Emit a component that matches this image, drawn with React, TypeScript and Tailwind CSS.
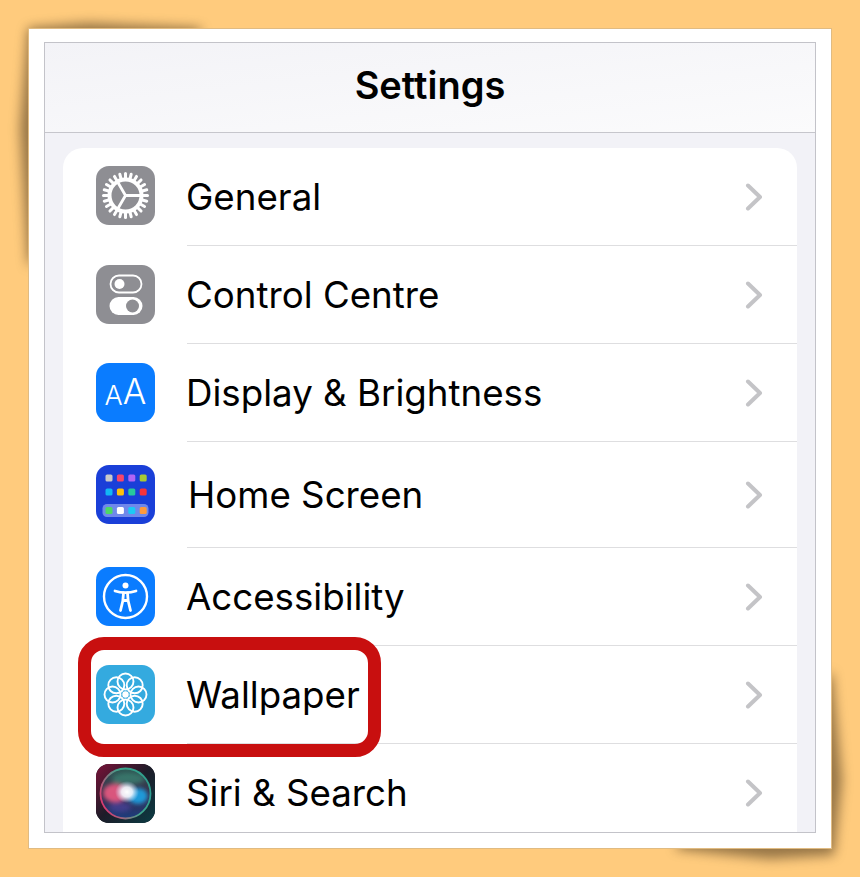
import React from "react";

function Chevron() {
  return (
    <svg width="18" height="28" viewBox="0 0 18 28" fill="none" className="shrink-0">
      <path d="M3 2.5 L15 14 L3 25.5" stroke="#c4c4c7" strokeWidth="4" strokeLinecap="round" strokeLinejoin="round" />
    </svg>
  );
}

function GearIcon() {
  const teeth = Array.from({ length: 24 }, (_, i) => i * 15);
  return (
    <div className="w-[59px] h-[59px] rounded-[13px] bg-[#8e8e93] shrink-0">
      <svg width="59" height="59" viewBox="0 0 59 59" fill="none">
        <g stroke="#fff">
          {teeth.map((a) => (
            <line key={a} x1="29.5" y1="7.5" x2="29.5" y2="13" strokeWidth="3" strokeLinecap="round" transform={`rotate(${a} 29.5 29.5)`} />
          ))}
          <circle cx="29.5" cy="29.5" r="16" strokeWidth="4" />
          <path d="M29.5 29.5 L46 29.5 M29.5 29.5 L21.2 15.2 M29.5 29.5 L21.2 43.8" strokeWidth="2.8" />
        </g>
      </svg>
    </div>
  );
}

function ControlIcon() {
  return (
    <div className="w-[59px] h-[59px] rounded-[13px] bg-[#8e8e93] shrink-0">
      <svg width="59" height="59" viewBox="0 0 59 59" fill="none">
        <rect x="14.5" y="10.5" width="31" height="17" rx="8.5" stroke="#fff" strokeWidth="1.8" />
        <circle cx="23.5" cy="19" r="5" fill="#fff" />
        <rect x="13.5" y="32" width="33" height="18" rx="9" fill="#fff" />
        <circle cx="36.5" cy="41" r="6.5" fill="#8e8e93" />
      </svg>
    </div>
  );
}

function TextSizeIcon() {
  return (
    <div className="w-[59px] h-[59px] rounded-[13px] bg-[#0a7cff] shrink-0 flex items-end justify-center pb-[13px] text-white font-['Inter',sans-serif] font-light leading-none">
      <span className="text-[27px]">A</span>
      <span className="text-[35px]">A</span>
    </div>
  );
}

function HomeIcon() {
  const top = ["#c9c9c9", "#f9456b", "#b065f5", "#a9c934", "#12b7f5", "#ffc10a", "#27c99b", "#f9333a"];
  const dock = ["#4cd964", "#ffffff", "#1cc8f5", "#ff9a3c"];
  return (
    <div className="w-[59px] h-[59px] rounded-[13px] bg-[#1a3fd8] shrink-0">
      <svg width="59" height="59" viewBox="0 0 59 59">
        {top.map((c, i) => (
          <rect key={i} x={9.5 + (i % 4) * 11.4} y={i < 4 ? 9.5 : 23.5} width="7" height="7" rx="1.6" fill={c} />
        ))}
        <rect x="6.5" y="39" width="46" height="13" rx="4.5" fill="#6f88ea" />
        {dock.map((c, i) => (
          <rect key={i} x={9.5 + i * 11.4} y="42" width="7" height="7" rx="1.6" fill={c} />
        ))}
      </svg>
    </div>
  );
}

function AccessIcon() {
  return (
    <div className="w-[59px] h-[59px] rounded-[13px] bg-[#0a7cff] shrink-0">
      <svg width="59" height="59" viewBox="0 0 59 59" fill="none" stroke="#fff">
        <circle cx="29.5" cy="29.5" r="21.5" strokeWidth="2.4" />
        <circle cx="29.5" cy="18.5" r="3" fill="#fff" stroke="none" />
        <path d="M19 24 C25 26 34 26 40 24" strokeWidth="2.8" strokeLinecap="round" />
        <path d="M27.5 26 L26.8 34 L24.5 43.5 M31.5 26 L32.2 34 L34.5 43.5 M27 33.5 L32 33.5" strokeWidth="2.8" strokeLinecap="round" strokeLinejoin="round" />
      </svg>
    </div>
  );
}

function WallpaperIcon() {
  const petals = Array.from({ length: 8 }, (_, i) => i * 45);
  return (
    <div className="w-[59px] h-[59px] rounded-[13px] bg-[#34aadf] shrink-0">
      <svg width="59" height="59" viewBox="0 0 59 59" fill="none" stroke="#fff" strokeWidth="1.9">
        {petals.map((a) => (
          <circle key={a} cx="29.5" cy="16.5" r="8" transform={`rotate(${a} 29.5 29.5)`} />
        ))}
        <circle cx="29.5" cy="29.5" r="3.2" fill="#fff" stroke="none" />
      </svg>
    </div>
  );
}

function SiriIcon() {
  return (
    <div className="w-[59px] h-[59px] rounded-[13px] overflow-hidden bg-[#1a1a24] shrink-0">
      <svg width="59" height="59" viewBox="0 0 59 59">
        <defs>
          <linearGradient id="siriBg" x1="0" y1="0" x2="1" y2="1">
            <stop offset="0" stopColor="#7a1238" />
            <stop offset="0.5" stopColor="#1c1c28" />
            <stop offset="1" stopColor="#0b3c44" />
          </linearGradient>
          <linearGradient id="siriRing" x1="0" y1="0.7" x2="1" y2="0.2">
            <stop offset="0" stopColor="#e0366f" />
            <stop offset="0.55" stopColor="#3fa58c" />
            <stop offset="1" stopColor="#2a9c8c" />
          </linearGradient>
          <linearGradient id="siriInner" x1="0" y1="0" x2="0" y2="1">
            <stop offset="0" stopColor="#2d5a55" />
            <stop offset="0.5" stopColor="#3a2a48" />
            <stop offset="1" stopColor="#1b3d7e" />
          </linearGradient>
          <radialGradient id="siriGlow">
            <stop offset="0" stopColor="#fff" />
            <stop offset="0.45" stopColor="#f4f9ff" stopOpacity="0.9" />
            <stop offset="1" stopColor="#cfe6ff" stopOpacity="0" />
          </radialGradient>
          <filter id="siriBlur"><feGaussianBlur stdDeviation="2" /></filter>
        </defs>
        <rect width="59" height="59" fill="url(#siriBg)" />
        <circle cx="29.5" cy="29.5" r="25" fill="url(#siriInner)" />
        <circle cx="29.5" cy="29.5" r="25" fill="none" stroke="url(#siriRing)" strokeWidth="1.8" />
        <g filter="url(#siriBlur)">
          <ellipse cx="32" cy="15" rx="16" ry="6" fill="#45c79a" opacity="0.35" />
          <ellipse cx="24" cy="43" rx="11" ry="5" fill="#6a48c0" opacity="0.4" />
          <ellipse cx="19" cy="29" rx="12" ry="9.5" fill="#e2587f" opacity="0.95" />
          <ellipse cx="42" cy="32" rx="10" ry="8" fill="#1f9fe0" opacity="0.95" />
        </g>
        <ellipse cx="31" cy="28" rx="12" ry="11" fill="url(#siriGlow)" />
      </svg>
    </div>
  );
}

const rows = [
  { label: "General", icon: <GearIcon />, height: "h-[98px]", text: "", nudge: "pb-[3px]" },
  { label: "Control Centre", icon: <ControlIcon />, height: "h-[98px]", text: "", nudge: "pb-[1px]" },
  { label: "Display & Brightness", icon: <TextSizeIcon />, height: "h-[98px]", text: "", nudge: "pb-[1px]" },
  { label: "Home Screen", icon: <HomeIcon />, height: "h-[106px]", text: "pl-[2px]", nudge: "pb-[1px]" },
  { label: "Accessibility", icon: <AccessIcon />, height: "h-[98px]", text: "", nudge: "pb-[1px]" },
  { label: "Wallpaper", icon: <WallpaperIcon />, height: "h-[98px]", text: "", nudge: "pb-[1px]" },
  { label: "Siri & Search", icon: <SiriIcon />, height: "h-[98px]", text: "", nudge: "" },
];

export default function App() {
  return (
    <div className="w-[860px] h-[877px] bg-[#ffcb7d] pt-[28px] pl-[28px] overflow-hidden font-['Inter',sans-serif]">
      <div className="relative w-[804px] h-[821px]">
        {/* curled paper shadows behind the card */}
        <div className="absolute left-[-10px] top-[-10px] w-[190px] h-[260px] blur-[6px] opacity-70">
          <div className="w-full h-full bg-[#6b5230] [clip-path:polygon(10px_10px,70px_5px,185px_10px,10px_250px,2px_110px)]" />
        </div>
        <div className="absolute right-[-12px] bottom-[-12px] w-[170px] h-[190px] blur-[6px] opacity-70">
          <div className="w-full h-full bg-[#6b5230] [clip-path:polygon(0px_178px,96px_188px,160px_184px,168px_109px,158px_0px)]" />
        </div>
        <div className="relative w-full h-full bg-white border border-[#e0bb82] pt-[13px] px-[15px] pb-[15px]">
          <div className="h-[791px] border border-[#c3c3c9] bg-[#f2f2f7] overflow-hidden flex flex-col">
            <div className="h-[90px] shrink-0 bg-gradient-to-br from-[#f3f3f7] to-[#fbfbfc] border-b border-[#c6c6cc] flex items-center justify-center pb-[4px] text-[38px] font-semibold text-black">
              Settings
            </div>
            <div className="mt-[15px] mx-[18px] flex-1 bg-white rounded-t-[20px] overflow-hidden">
              {rows.map((r, i) => (
                <div key={r.label} className={`flex items-center ${r.height}`}>
                  <div className={`pl-[33px] pr-[32px] ${r.nudge}`}>{r.icon}</div>
                  <div className={`flex-1 h-full flex items-center justify-between pr-[34px] ${i < 6 ? "border-b border-[#dedee0]" : ""}`}>
                    <span className={`text-[36.7px] -ml-[1px] pt-[1px] text-black leading-none ${r.text}`}>{r.label}</span>
                    <Chevron />
                  </div>
                </div>
              ))}
            </div>
          </div>
          {/* red highlight around Wallpaper */}
          <div className="absolute left-[49px] top-[608px] w-[303px] h-[120px] border-[13px] border-[#c80f0f] rounded-[26px]" />
        </div>
      </div>
    </div>
  );
}
